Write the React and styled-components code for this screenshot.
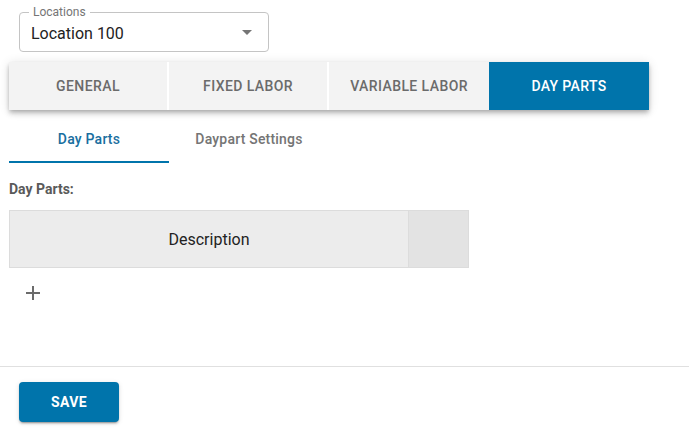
import React from "react";
import styled, { createGlobalStyle } from "styled-components";

const Global = createGlobalStyle`
  html, body { margin: 0; padding: 0; background: #fff; }
  body { font-family: Roboto, "Noto Sans", Arial, sans-serif; }
  * { box-sizing: border-box; }
`;

const Page = styled.div`
  width: 689px;
  display: flex;
  flex-direction: column;
`;

const Content = styled.div`
  padding: 12px 0 0 9px;
  display: flex;
  flex-direction: column;
  height: 366px;
  flex-shrink: 0;
`;

const SelectBox = styled.div`
  position: relative;
  margin-left: 10px;
  width: 250px;
  height: 40px;
  border: 1px solid #c4c4c4;
  border-radius: 4px;
  display: flex;
  align-items: center;
  justify-content: space-between;
  padding: 0 16px 0 11px;
`;

const SelectLabel = styled.span`
  position: absolute;
  left: 9px;
  top: -8px;
  padding: 0 4px;
  background: #fff;
  font-size: 12px;
  line-height: 14px;
  color: #757575;
`;

const SelectValue = styled.span`
  font-size: 16px;
  color: #222;
  padding-top: 2px;
`;

const Caret = styled.span`
  width: 0;
  height: 0;
  border-left: 5px solid transparent;
  border-right: 5px solid transparent;
  border-top: 5px solid #757575;
`;

const TabBar = styled.div`
  margin-top: 10px;
  width: 640px;
  height: 48px;
  display: flex;
  background: #f3f3f3;
  box-shadow: 0 2px 4px -1px rgba(0,0,0,0.2), 0 4px 5px 0 rgba(0,0,0,0.14), 0 1px 10px 0 rgba(0,0,0,0.12);
`;

const Tab = styled.div`
  flex: 0 0 160px;
  display: flex;
  align-items: center;
  justify-content: center;
  font-family: "Roboto Medium", Roboto, Arial, sans-serif;
  font-size: 14px;
  font-weight: ${p => (p.$active ? 700 : 500)};
  letter-spacing: 0.4px;
  text-transform: uppercase;
  color: ${p => (p.$active ? "#fff" : "#6b6b6b")};
  background: ${p => (p.$active ? "#0074ab" : "#f3f3f3")};
  border-right: ${p => (p.$last ? "none" : "2px solid #fff")};
`;

const SubTabs = styled.div`
  margin-top: 4px;
  height: 49px;
  display: flex;
`;

const SubTab = styled.div`
  flex: 0 0 160px;
  display: flex;
  align-items: center;
  justify-content: center;
  font-family: "Roboto Medium", Roboto, Arial, sans-serif;
  font-size: 14px;
  font-weight: 500;
  letter-spacing: 0.2px;
  padding-top: 2px;
  color: ${p => (p.$active ? "#1a6fa0" : "#757575")};
  border-bottom: 2px solid ${p => (p.$active ? "#0074ab" : "transparent")};
`;

const SectionLabel = styled.div`
  margin-top: 17px;
  font-size: 14px;
  line-height: 18px;
  font-weight: 700;
  color: #5a5a5a;
`;

const Table = styled.div`
  margin-top: 12px;
  width: 460px;
  height: 58px;
  display: flex;
  border: 1px solid #dcdcdc;
`;

const HeadCell = styled.div`
  flex: ${p => (p.$grow ? "1 1 auto" : "0 0 59px")};
  display: flex;
  align-items: center;
  justify-content: center;
  font-size: 16px;
  color: #222;
  background: ${p => (p.$grow ? "#ececec" : "#e3e3e3")};
  border-right: ${p => (p.$grow ? "1px solid #dcdcdc" : "none")};
`;

const AddButton = styled.div`
  margin-top: 17px;
  margin-left: 16px;
  width: 16px;
  height: 16px;
  display: flex;
`;

const Footer = styled.div`
  border-top: 1px solid #e0e0e0;
  padding: 15px 19px 11px;
`;

const SaveButton = styled.button`
  width: 100px;
  height: 40px;
  border: none;
  border-radius: 4px;
  background: #0074ab;
  color: #fff;
  font-family: Roboto, Arial, sans-serif;
  font-size: 14px;
  font-weight: 700;
  letter-spacing: 0.4px;
  box-shadow: 0 3px 1px -2px rgba(0,0,0,0.2), 0 2px 2px 0 rgba(0,0,0,0.14), 0 1px 5px 0 rgba(0,0,0,0.12);
`;

const tabs = ["General", "Fixed Labor", "Variable Labor", "Day Parts"];

export default function App() {
  return (
    <Page>
      <Global />
      <Content>
        <SelectBox>
          <SelectLabel>Locations</SelectLabel>
          <SelectValue>Location 100</SelectValue>
          <Caret />
        </SelectBox>
        <TabBar>
          {tabs.map((t, i) => (
            <Tab key={t} $active={i === 3} $last={i >= 2}>{t}</Tab>
          ))}
        </TabBar>
        <SubTabs>
          <SubTab $active>Day Parts</SubTab>
          <SubTab>Daypart Settings</SubTab>
        </SubTabs>
        <SectionLabel>Day Parts:</SectionLabel>
        <Table>
          <HeadCell $grow>Description</HeadCell>
          <HeadCell />
        </Table>
        <AddButton>
          <svg width="16" height="16" viewBox="0 0 16 16">
            <path d="M8 1v14M1 8h14" stroke="#6b6b6b" strokeWidth="2" fill="none" />
          </svg>
        </AddButton>
      </Content>
      <Footer>
        <SaveButton>SAVE</SaveButton>
      </Footer>
    </Page>
  );
}
